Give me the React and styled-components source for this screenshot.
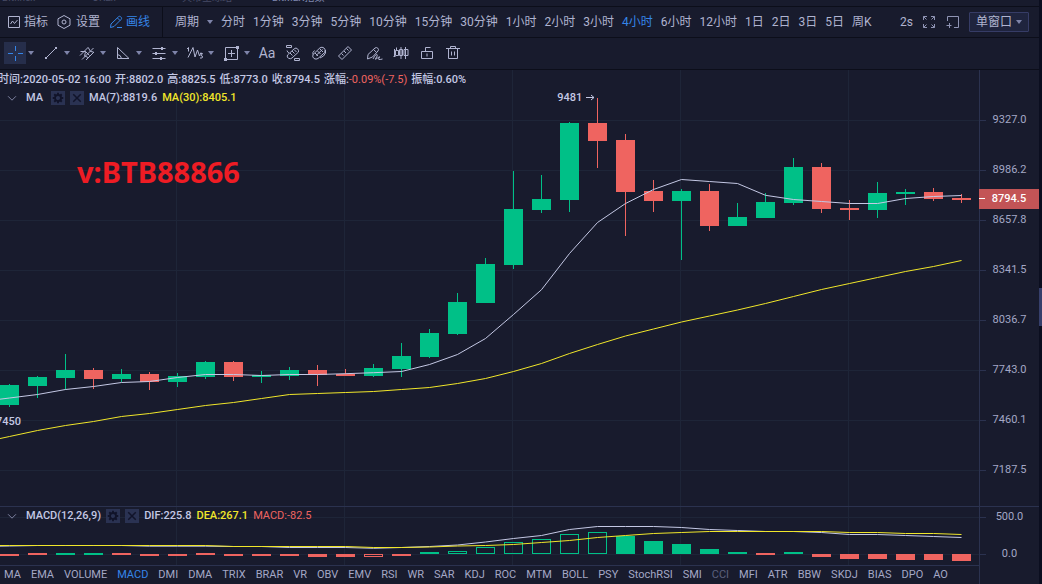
import React, { useState } from 'react'
import styled, { createGlobalStyle } from 'styled-components'

const UP = '#00c087'
const DOWN = '#ef6460'
const LIGHT = '#c4c8e4'
const YELLOW = '#f0e62a'
const BLUE = '#3585e8'

const PLOT_W = 979
const PRICE = { top: 70, height: 436 }
const MACD = { top: 507, height: 58 }
const cx = i => 9.5 + i * 28

// [top, bottom, high, low, up]
const candles = [
  [385, 405, 384, 407, 1], [377, 386, 376, 398, 1], [370, 378, 354, 390, 1],
  [370, 379, 368, 389, 0], [374, 379, 369, 382, 1], [374, 382, 372, 390, 0],
  [376, 382, 373, 387, 1], [362, 377, 361, 379, 1], [362, 377, 361, 381, 0],
  [375, 377, 371, 383, 1], [370, 376, 367, 380, 1], [370, 375, 365, 386, 0],
  [374, 376, 369, 376, 0], [368, 376, 364, 377, 1], [356, 369, 343, 377, 1],
  [333, 357, 329, 358, 1], [302, 334, 293, 335, 1], [264, 303, 258, 303, 1],
  [209, 265, 171, 269, 1], [199, 210, 175, 213, 1], [123, 200, 122, 212, 1],
  [123, 141, 98, 168, 0], [140, 192, 134, 236, 0], [191, 201, 180, 212, 0],
  [191, 201, 189, 260, 1], [191, 226, 184, 231, 0], [217, 226, 203, 226, 1],
  [202, 218, 193, 218, 1], [167, 203, 158, 205, 1], [167, 209, 163, 213, 0],
  [208, 210, 200, 220, 0], [193, 210, 182, 218, 1], [192, 194, 189, 205, 1],
  [192, 199, 188, 201, 0], [198, 200, 194, 203, 0]
]

const ma7 = [398, 394.5, 389.5, 386.5, 382.5, 381.5, 377.5, 374.5, 374.5, 375.5, 374.5, 374.5,
  373.7, 372.7, 371.5, 364.5, 354.5, 338.5, 314.5, 289.7, 253.5, 222.5, 203.5, 189.5, 179.5,
  181.5, 183.5, 195.3, 199.5, 201.5, 203.5, 203.5, 198.5, 196.5, 195.5]

const ma30 = [436.5, 430.5, 425.5, 421.5, 416.5, 413.5, 409.5, 405.5, 402.5, 398.5, 394.5, 393.5,
  392.5, 391.5, 389.5, 387.5, 383.5, 378.5, 371.5, 363.5, 353.5, 344.5, 336, 329, 322,
  316, 310, 303.5, 296.5, 289.5, 283.5, 277.5, 271.5, 266.5, 260.5]

const dif = [546, 545.5, 545.5, 545.5, 545.5, 546.2, 546.2, 546.2, 546.5, 546.5, 547.5, 547.5,
  547.5, 548.3, 547.5, 546.5, 545, 542, 538.5, 535.5, 529.5, 526.5, 526.5, 526.5, 527.5,
  529.5, 530.5, 531.5, 531.5, 532.5, 534.5, 534.5, 535.5, 536.5, 537.5]

const dea = [545.5, 545.5, 545.5, 545.5, 545.5, 545.5, 545.5, 545.5, 546.5, 546.5, 546.5, 546.5,
  546.5, 547.5, 547.5, 547, 546, 545.5, 544.5, 542.5, 540.5, 537.5, 535.5, 533.5, 532.5,
  531.5, 531.5, 531.5, 531.5, 531.5, 532.5, 532.5, 533.5, 533.5, 534.5]

// [top, bottom, up, hollow]
const bars = [
  [554, 556, 0], [553, 555, 0], [553, 555, 1], [553, 555, 1], [553, 555, 0], [554, 556, 0],
  [554, 556, 0], [553, 555, 0], [554, 556, 0], [554, 556, 0], [554, 556, 0], [554, 557, 0],
  [554, 557, 0], [554, 557, 0, 1], [554, 556, 0], [552, 554, 1], [551, 554, 1, 1],
  [547, 554, 1, 1], [542, 554, 1, 1], [539, 554, 1, 1], [534, 554, 1, 1], [532, 554, 1, 1],
  [536, 554, 1], [541, 554, 1], [544, 554, 1], [549, 554, 1], [552, 554, 1], [553, 555, 0],
  [552, 554, 1], [554, 557, 0], [554, 559, 0], [554, 559, 0], [554, 560, 0], [554, 560, 0],
  [554, 561, 0]
]

const prices = ['9327.0', '8986.2', '8657.8', '8341.5', '8036.7', '7743.0', '7460.1', '7187.5']
const gridX = [176, 344, 512, 680, 848]
const gridY = [120, 170, 220, 270, 320, 370, 420, 470]

const periods = ['分时', '1分钟', '3分钟', '5分钟', '10分钟', '15分钟', '30分钟', '1小时', '2小时', '3小时',
  '4小时', '6小时', '12小时', '1日', '2日', '3日', '5日', '周K']

const indicators = ['MA', 'EMA', 'VOLUME', 'MACD', 'DMI', 'DMA', 'TRIX', 'BRAR', 'VR', 'OBV', 'EMV', 'RSI',
  'WR', 'SAR', 'KDJ', 'ROC', 'MTM', 'BOLL', 'PSY', 'StochRSI', 'SMI', 'CCI', 'MFI', 'ATR', 'BBW',
  'SKDJ', 'BIAS', 'DPO', 'AO']

const icons = {
  indicator: <><path d="M2.5 2.5h11v11h-11z" /><path d="M4.5 10l2-3 2 2.5 3-3.5" /></>,
  settings: <><path d="M8 1.5l6 3.3v6.4L8 14.500l-6-3.300V4.800z" /><circle cx="8" cy="8" r="2" /></>,
  pen: <><path d="M2.5 13.5l.5-3.5 7.6-7.3q1-.9 2 0l.6.6q.9 1 0 2L6 12.500z M9.500 4l2.600 2.600 M9 13.500h5" /></>,
  cross: <path d="M8.500 1v5M8.500 11v5M1 8.500h5M11 8.500h5" />,
  line: <><path d="M3.500 12.500l9-9" /><path d="M2 12h2v2H2zM12 2h2v2h-2z" fill="currentColor" stroke="none" /></>,
  parallel: <><path d="M1 10.500L9.500 2M3 14.500L14.500 3M7 15l8-8" /><path d="M1.500 6.500h5l-1 5M6.500 6.500l4 4M9.500 3l2 3.500 3 .500M6 11l3 1.500" /></>,
  triangle: <><path d="M2.500 2.500v11H14z" /><path d="M2.500 9.500q3.500 .500 4 4" /></>,
  levels: <><path d="M1.500 3.500h13M1.500 8.500h13M1.500 13.500h13" /><path d="M10 2h2v3h-2zM4 7h2v3H4zM9 12h2v3H9z" fill="currentColor" stroke="none" /></>,
  wave: <><path d="M0 4l1.500-1.500v4M1 12.500L6 2.500l2 9.500L10.500 5l2 6 1.500-3.500" /><path d="M13 8.500h2.500l-1.500 2q1.500 0 1.500 1.500t-2.500 1" /></>,
  frame: <><path d="M2.500 2.500h12v12h-12z M8.500 5v7M5 8.500h7" /><path d="M1 13h3v3H1zM13 1h3v3h-3z" fill="currentColor" stroke="none" /></>,
  rulerHide: <><path d="M1.500 .500h5v2h-5zM9.500 13.500h5v2h-5z" /><path d="M2.500 10L9.500 3.500q1.500-1 3 .300t1 3.200L7 13q-1.500 1.300-3.500 .300T2.500 10z M5 8l2.500 2.500M7 6l2.500 2.500M9 4.500L11.500 7M2 5.500q.500 2 2 2.500" /></>,
  rulerAll: <><path d="M2 9.500L9 2.800q2-1.300 4 .200t.700 4.500L7 13.500q-2 1.300-4 0T2 9.500z" /><path d="M5 10.500l6.500-6M6.500 6l3 3M9 4l3 3M4 8l3 3" /><path d="M3.500 5.500q-2.500 2-1.500 4M14.500 5q1 3-2 6L9 13" /></>,
  ruler: <><path d="M1.500 11l9.500-9.500 3.500 3.500L5 14.500z" /><path d="M4.500 8.500L6.500 10.500M7 6l2 2M9.500 3.500l2 2" /></>,
  brush: <><path d="M.500 14l.500-4.500L8 3q1.500-1 2.800.200t.200 2.800L5.500 12 .500 14z M6.500 4.500l3.200 3" /><path d="M6 14q3-5.500 4-4.500t-1 3.500 1.500 0 1.500 0 3.500 1" /></>,
  bars: <><path d="M1.500 4v7M3.500 2.500v3M2.500 5.500h3v5h-3zM8 2v12M6.500 4.500h3v6h-3zM12.500 2v12M11 4.500h4v6h-4zM.500 11.500h2" /></>,
  lock: <><path d="M2.500 6.500h11v7h-11z M6.500 6.500v-4h5" /><path d="M8 8.500v3" /></>,
  trash: <><path d="M1 3.500h14M3.500 3.500v10h9v-10M5.500 3.500v-2h5v2M6.500 6.500v4M9.500 6.500v4" /></>,
  full: <><path d="M2.500 6V2.500H6M2.500 2.500l3 3M10 2.500h3.500V6M13.500 2.500l-3 3M2.500 10v3.500H6M2.500 13.500l3-3M10 13.500h3.500V10M13.500 13.500l-3-3" /></>,
  addWin: <><path d="M2.500 7V2.500h11v11H9M1.500 11.500h5M4.500 9v5" /></>,
  chevron: <path d="M3.500 6l4.500 4.500L12.500 6" stroke="#8b90b0" />,
  gear: <><circle cx="8" cy="8" r="4" strokeWidth="2.500" /><path d="M8 1v3M8 12v3M1 8h3M12 8h3M3 3l2 2M11 11l2 2M13 3l-2 2M5 11l-2 2" strokeWidth="2.500" /></>,
  close: <path d="M3 3l10 10M13 3L3 13" strokeWidth="2" />
}

const Global = createGlobalStyle`
  * { box-sizing: border-box; }
  body {
    margin: 0;
    background: #181b2d;
    color: #b0b4d0;
    font-family: Roboto, "Noto Sans CJK SC", sans-serif;
    font-size: 12px;
  }
  button, select { font: inherit; color: inherit; }
`

const Page = styled.div`
  display: grid;
  grid-template-columns: minmax(0, 1fr) 3px;
  min-height: 100vh;
`
const Main = styled.main`
  display: flex;
  flex-direction: column;
  min-width: 0;
`
const Side = styled.aside`
  display: flex;
  align-items: center;
  padding-top: 30px;
  background: #0b0e1f;
`
const Handle = styled.button`
  width: 3px;
  height: 38px;
  padding: 0;
  border: 0;
  background: #363f6b;
`
const Markets = styled.nav`
  display: flex;
  align-items: flex-end;
  height: 7px;
  padding-left: 2px;
  overflow: hidden;
  border-bottom: 1px solid #0c0e1a;
  font-size: 10px;
  line-height: 12px;
  color: #474b66;
`
const Market = styled.a`
  flex: none;
  width: 90px;
  margin-bottom: 2px;
  text-decoration: none;
  color: ${p => (p.$on ? '#8088b0' : 'inherit')};
`
const Bar = styled.div`
  display: flex;
  align-items: center;
  height: ${p => p.$h}px;
  border-bottom: 1px solid #0c0e1a;
`
const BarGroup = styled.div`
  display: flex;
  align-items: center;
  align-self: stretch;
  gap: 8px;
  padding: 0 12px 0 6px;
  border-right: 1px solid #0c0e1a;
`
const Periods = styled.div`
  display: flex;
  align-items: center;
  gap: 8px;
  padding-left: 12px;
`
const TextButton = styled.button`
  display: flex;
  align-items: center;
  gap: ${p => p.$gap || 2}px;
  padding: 0;
  border: 0;
  background: none;
  line-height: 18px;
  white-space: nowrap;
  cursor: pointer;
  color: ${p => (p.$on ? BLUE : 'inherit')};
`
const Tools = styled.div`
  display: flex;
  align-items: center;
  gap: 8px;
  margin-left: auto;
  padding-right: 10px;
`
const IconButton = styled(TextButton)`
  color: #8f94b4;
`
const SelectBox = styled.label`
  display: flex;
  align-items: center;
  height: 20px;
  padding: 0 6px;
  border: 1px solid #363c66;
  border-radius: 1px;
  background: #1f243e;
`
const Select = styled.select`
  appearance: none;
  width: 40px;
  padding: 0;
  border: 0;
  outline: 0;
  background: none;
`
const Caret = styled.span`
  flex: none;
  border: 3px solid transparent;
  border-top: 4px solid #7e84aa;
  border-bottom: 0;
`
const DrawBar = styled(Bar)`
  padding: 0 0 1px 4px;
`
const DrawGroup = styled.div`
  display: flex;
  align-items: center;
  gap: 2px;
  width: 36px;
`
const DrawButton = styled.button`
  display: flex;
  align-items: center;
  justify-content: center;
  width: 22px;
  height: 22px;
  padding: 0;
  border: 0;
  font-size: 14px;
  background: ${p => (p.$on ? '#262e4b' : 'none')};
  color: ${p => (p.$on ? BLUE : 'inherit')};
`
const DrawSet = styled.div`
  display: flex;
  gap: 4px;
  margin-right: 8px;
`
const Svg = styled.svg`
  flex: none;
  display: block;
  width: ${p => p.$size}px;
  height: ${p => p.$size}px;
  fill: none;
  stroke: currentColor;
  stroke-width: 1px;
`
const Chart = styled.div`
  flex: 1;
  display: grid;
  grid-template-columns: minmax(0, 1fr) 60px;
  grid-template-rows: minmax(437px, 1fr) 58px 19px;
  font-size: 11px;
`
const Pane = styled.section`
  position: relative;
  overflow: hidden;
  border-bottom: ${p => (p.$line ? '1px solid #2b324f' : '0')};
`
const Plot = styled.svg`
  position: absolute;
  width: 100%;
  height: 100%;
`
const Legend = styled.div`
  position: relative;
  display: flex;
  align-items: center;
  gap: 5px;
  height: 18px;
  padding-left: 5px;
  line-height: 18px;
  white-space: nowrap;
  font-weight: 500;
  color: ${LIGHT};
`
const Quote = styled(Legend)`
  gap: 4px;
  padding: 1px 0 0;
  height: 19px;
  margin-left: -2px;
`
const Value = styled.span`
  color: ${p => p.$color || 'inherit'};
  font-weight: ${p => (p.$thin ? 400 : 500)};
`
const Name = styled.span`
  min-width: 20px;
  margin-left: 2px;
`
const MiniButton = styled.button`
  display: flex;
  align-items: center;
  justify-content: center;
  width: 14px;
  height: 14px;
  padding: 0;
  border: 0;
  background: #2a3252;
  color: #11142a;
`
const Note = styled.div`
  position: absolute;
  display: flex;
  align-items: center;
  gap: 4px;
  line-height: 14px;
  font-weight: 500;
  color: ${LIGHT};
`
const HighNote = styled(Note)`
  right: 39.2%;
  top: 4.8%;
`
const LowNote = styled(Note)`
  left: -4px;
  top: 79.2%;
`
const Watermark = styled.div`
  position: absolute;
  left: 77px;
  top: 83px;
  font-family: "Noto Sans", "Open Sans", sans-serif;
  font-size: 29px;
  font-weight: 700;
  line-height: 38px;
  color: #ee1c24;
`
const Axis = styled.div`
  position: relative;
  display: flex;
  flex-direction: column;
  border-left: 1px solid #2b324f;
  border-bottom: ${p => (p.$line ? '1px solid #2b324f' : '0')};
  padding-top: ${p => p.$top}px;
`
const Tick = styled.div`
  flex: none;
  display: flex;
  align-items: center;
  height: ${p => p.$h}px;
  color: #a4a8c6;

  &::before {
    content: '';
    width: 6px;
    height: 1px;
    background: #2b324f;
  }
  span {
    flex: 1;
    padding-right: 6px;
    line-height: 14px;
    text-align: center;
  }
`
const PriceTag = styled(Tick)`
  position: absolute;
  left: -1px;
  right: 0;
  top: 27.2%;
  background: #c35456;
  color: #fff;
  font-weight: 500;

  &::before {
    background: #fff;
  }
`
const Tabs = styled.nav`
  display: flex;
  align-items: center;
  gap: 10px;
  padding-left: 4px;
  border-top: 1px solid #2b324f;
  overflow: hidden;
`
const Tab = styled(TextButton)`
  line-height: 16px;
  color: ${p => (p.$on ? BLUE : p.$dim ? '#5b607d' : '#a4a8c6')};
`

const Icon = ({ name, size = 16 }) => (
  <Svg $size={size} viewBox="0 0 16 16" aria-hidden="true">{icons[name]}</Svg>
)

// the lines run on past the left edge with their first slope
const path = values => `M${cx(-1)} ${2 * values[0] - values[1]}` +
  values.map((y, i) => `L${cx(i)} ${y}`).join('')

function Grid({ ys, top, height }) {
  return (
    <g stroke="#1e2538" strokeWidth="1">
      {gridX.map(x => <path key={x} d={`M${x + 0.5} ${top}v${height}`} />)}
      {ys.map(y => <path key={y} d={`M0 ${y + 0.5}h${PLOT_W}`} />)}
    </g>
  )
}

function PricePlot() {
  return (
    <Plot viewBox={`0 ${PRICE.top} ${PLOT_W} ${PRICE.height}`} preserveAspectRatio="none">
      <Grid ys={gridY} {...PRICE} />
      {candles.map(([top, bottom, high, low, up], i) => (
        <g key={i} fill={up ? UP : DOWN}>
          <rect x={cx(i) - 0.5} y={high} width="1" height={low - high} />
          <rect x={cx(i) - 9.5} y={top} width="19" height={bottom - top} />
        </g>
      ))}
      <path d={path(ma30)} fill="none" stroke={YELLOW} />
      <path d={path(ma7)} fill="none" stroke={LIGHT} />
    </Plot>
  )
}

function MacdPlot() {
  return (
    <Plot viewBox={`0 ${MACD.top} ${PLOT_W} ${MACD.height}`} preserveAspectRatio="none">
      <Grid ys={[517, 554]} {...MACD} />
      {bars.map(([top, bottom, up, hollow], i) => hollow
        ? <rect key={i} x={cx(i) - 9} y={top + 0.5} width="18" height={bottom - top - 1} fill="none" stroke={up ? UP : DOWN} />
        : <rect key={i} x={cx(i) - 9.5} y={top} width="19" height={bottom - top} fill={up ? UP : DOWN} />
      )}
      <path d={path(dif)} fill="none" stroke={LIGHT} />
      <path d={path(dea)} fill="none" stroke={YELLOW} />
    </Plot>
  )
}

function LegendHead({ name }) {
  return (
    <>
      <Icon name="chevron" size={14} />
      <Name>{name}</Name>
      <MiniButton aria-label={name + ' 设置'}><Icon name="gear" size={12} /></MiniButton>
      <MiniButton aria-label={name + ' 关闭'}><Icon name="close" size={12} /></MiniButton>
    </>
  )
}

export default function App() {
  const [period, setPeriod] = useState('4小时')
  const [tab, setTab] = useState('MACD')

  return (
    <Page>
      <Global />
      <Main>
        <Markets>
          <Market href="#bitfinex">Bitfinex</Market>
          <Market href="#okex">OKEx</Market>
          <Market href="#huobi">火币全球站</Market>
          <Market href="#bitmex" $on>BitMEX指数</Market>
        </Markets>

        <Bar $h={31}>
          <BarGroup>
            <TextButton><Icon name="indicator" />指标</TextButton>
            <TextButton $gap={4}><Icon name="settings" />设置</TextButton>
            <TextButton $on><Icon name="pen" />画线</TextButton>
          </BarGroup>
          <Periods>
            <TextButton $gap={8}>周期<Caret /></TextButton>
            {periods.map(p => (
              <TextButton key={p} $on={p === period} onClick={() => setPeriod(p)}>{p}</TextButton>
            ))}
          </Periods>
          <Tools>
            <TextButton>2s</TextButton>
            <IconButton aria-label="全屏"><Icon name="full" /></IconButton>
            <IconButton aria-label="新窗口"><Icon name="addWin" /></IconButton>
            <SelectBox>
              <Select aria-label="窗口"><option>单窗口</option></Select>
              <Caret />
            </SelectBox>
          </Tools>
        </Bar>

        <DrawBar $h={32}>
          {['cross', 'line', 'parallel', 'triangle', 'levels', 'wave', 'frame'].map((n, i) => (
            <DrawGroup key={n}>
              <DrawButton $on={i === 0} aria-label={n}><Icon name={n} /></DrawButton>
              <Caret />
            </DrawGroup>
          ))}
          <DrawSet>
            <DrawButton>Aa</DrawButton>
            {['rulerHide', 'rulerAll', 'ruler'].map(n => (
              <DrawButton key={n} aria-label={n}><Icon name={n} /></DrawButton>
            ))}
          </DrawSet>
          <DrawSet>
            {['brush', 'bars', 'lock', 'trash'].map(n => (
              <DrawButton key={n} aria-label={n}><Icon name={n} /></DrawButton>
            ))}
          </DrawSet>
        </DrawBar>

        <Chart>
          <Pane $line>
            <PricePlot />
            <Quote>
              <Value>时间:2020-05-02 16:00</Value>
              <Value>开:8802.0</Value>
              <Value>高:8825.5</Value>
              <Value>低:8773.0</Value>
              <Value>收:8794.5</Value>
              <Value>涨幅:<Value $color={DOWN} $thin>-0.09%(-7.5)</Value></Value>
              <Value>振幅:0.60%</Value>
            </Quote>
            <Legend>
              <LegendHead name="MA" />
              <Value>MA(7):8819.6</Value>
              <Value $color={YELLOW}>MA(30):8405.1</Value>
            </Legend>
            <Watermark>v:BTB88866</Watermark>
            <HighNote>
              9481
              <svg width="9" height="7" fill="none" stroke="currentColor"><path d="M0 3.500h8M5 1l3 2.500L5 6" /></svg>
            </HighNote>
            <LowNote>7450</LowNote>
          </Pane>
          <Axis $line $top={25}>
            {prices.map(p => <Tick key={p} $h={50}><span>{p}</span></Tick>)}
            <PriceTag $h={20}><span>8794.5</span></PriceTag>
          </Axis>

          <Pane>
            <MacdPlot />
            <Legend>
              <LegendHead name="MACD(12,26,9)" />
              <Value>DIF:225.8</Value>
              <Value $color={YELLOW}>DEA:267.1</Value>
              <Value $color={DOWN} $thin>MACD:-82.5</Value>
            </Legend>
          </Pane>
          <Axis>
            <Tick $h={20}><span>500.0</span></Tick>
            <Tick $h={54}><span>0.0</span></Tick>
          </Axis>

          <Tabs>
            {indicators.map(n => (
              <Tab key={n} $on={n === tab} $dim={n === 'CCI'} onClick={() => setTab(n)}>{n}</Tab>
            ))}
          </Tabs>
          <Axis />
        </Chart>
      </Main>
      <Side>
        <Handle aria-label="展开" />
      </Side>
    </Page>
  )
}
